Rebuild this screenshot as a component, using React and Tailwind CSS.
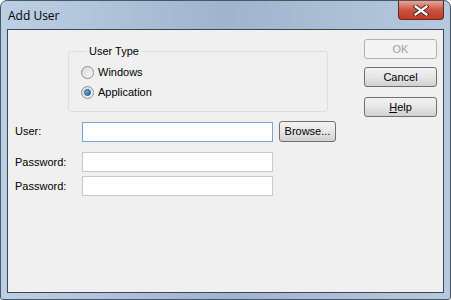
const ui = { fontFamily: '"Liberation Sans", Arial, sans-serif' };

const Radio = ({ checked, label }) => (
  <label className="flex items-center gap-[4px] h-[20px]">
    <span className="flex h-[13px] w-[13px] items-center justify-center rounded-full border border-[#8e8f8f] bg-gradient-to-br from-[#d9d9d9] to-[#f7f7f7]">
      {checked ? (
        <span className="h-[7px] w-[7px] rounded-full border border-[#1c4f87] bg-gradient-to-br from-[#7fc1f0] to-[#1561ad]" />
      ) : null}
    </span>
    <span className="text-[11px] text-black">{label}</span>
  </label>
);

const DlgButton = ({ children, disabled, className = '' }) => (
  <button
    className={
      'h-[20px] w-[73px] rounded-[3px] border text-[11px] ' +
      (disabled
        ? 'border-[#adb2b5] bg-[#f4f4f4] text-[#a0a0a0] '
        : 'border-[#707070] bg-gradient-to-b from-[#f2f2f2] via-[#e6e6e6] to-[#d0d0d0] text-black ') +
      className
    }
  >
    {children}
  </button>
);

const Field = ({ label, focused }) => (
  <div className="flex h-[20px] items-center">
    <span className="w-[67px] text-[11px] text-black">{label}</span>
    <input
      className={
        'h-[20px] w-[191px] border bg-white outline-none ' +
        (focused ? 'border-[#7da2ce]' : 'border-[#c5c9ce]')
      }
    />
  </div>
);

export default function App() {
  return (
    <div
      style={ui}
      className="flex h-[300px] w-[451px] flex-col overflow-hidden rounded-t-[7px] rounded-b-[3px] border border-[#4c5766] bg-gradient-to-r from-[#bcd0e5] via-[#9fb4cd] to-[#b6c9de]"
    >
      <div className="flex h-[28px] shrink-0 items-start justify-between">
        <span className="ml-[7px] mt-[6px] text-[12px] text-black" style={{ fontFamily: '"Open Sans", "Noto Sans", sans-serif' }}>
          Add User
        </span>
        <button className="mr-[6px] flex h-[19px] w-[46px] items-center justify-center rounded-b-[4px] border border-t-0 border-[#5e2b25] bg-gradient-to-b from-[#e9a596] via-[#c9533f] to-[#c13a25]">
          <svg width="16" height="11" viewBox="0 0 16 11">
            <path d="M2.5 1.5 L13.5 9.5 M13.5 1.5 L2.5 9.5" stroke="#3b2521" strokeWidth="4" strokeLinecap="square" />
            <path d="M2.5 1.5 L13.5 9.5 M13.5 1.5 L2.5 9.5" stroke="#ffffff" strokeWidth="2.2" strokeLinecap="square" />
          </svg>
        </button>
      </div>
      <div className="mx-[6px] mb-[6px] flex flex-1 border border-[#3c4654] bg-[#f0f0f0]">
        <div className="flex flex-1 flex-col pl-[7px]">
          <fieldset className="ml-[53px] mt-[13px] h-[69px] w-[260px] rounded-[3px] border border-[#d5dfe5] pl-[12px]">
            <legend className="ml-[5px] px-[3px] text-[11px] text-black">User Type</legend>
            <div className="mt-[3px] flex flex-col">
              <Radio label="Windows" />
              <Radio label="Application" checked />
            </div>
          </fieldset>
          <div className="mt-[9px] flex items-center">
            <Field label="User:" focused />
            <button className="ml-[6px] h-[21px] w-[57px] rounded-[3px] border border-[#707070] bg-gradient-to-b from-[#f2f2f2] via-[#e6e6e6] to-[#d0d0d0] text-[11px] text-black">
              Browse...
            </button>
          </div>
          <div className="mt-[10px] flex flex-col gap-[4px]">
            <Field label="Password:" />
            <Field label="Password:" />
          </div>
        </div>
        <div className="mr-[6px] mt-[9px] flex flex-col gap-[8px]">
          <DlgButton disabled>OK</DlgButton>
          <DlgButton>Cancel</DlgButton>
          <DlgButton className="mt-[2px]">
            <span className="underline">H</span>elp
          </DlgButton>
        </div>
      </div>
    </div>
  );
}
